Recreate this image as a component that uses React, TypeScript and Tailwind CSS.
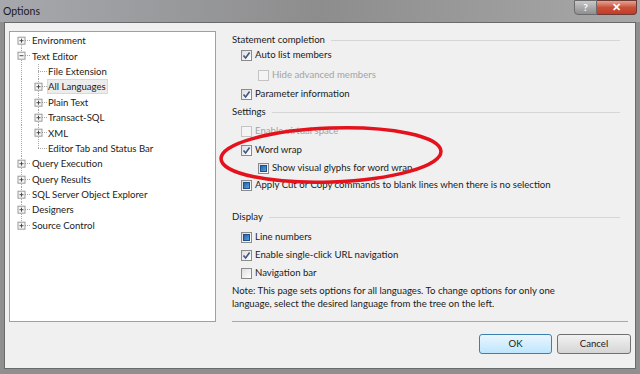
import React from 'react'

type BoxState = 'checked' | 'unchecked' | 'filled'

const font = { fontFamily: 'Lato, "Noto Sans", sans-serif' }

const Check = ({ state, disabled }: { state: BoxState; disabled?: boolean }) => (
  <span
    className={`relative flex h-[11px] w-[11px] shrink-0 items-center justify-center border ${
      disabled ? 'border-[#c4c4c4] bg-[#f4f4f4]' : 'border-[#8a8a8a] bg-gradient-to-br from-[#dedede] to-white'
    }`}
  >
    {state === 'checked' && (
      <svg width="9" height="9" viewBox="0 0 9 9">
        <path d="M1.5 4.5 L3.6 7 L7.6 1.5" fill="none" stroke="#3f5687" strokeWidth="1.6" />
      </svg>
    )}
    {state === 'filled' && (
      <span className="h-[7px] w-[7px] border border-[#1f4f8f] bg-gradient-to-br from-[#2a62a8] to-[#4fa3df]" />
    )}
  </span>
)

const Option = ({
  label,
  state = 'unchecked',
  disabled,
  indent,
  className = '',
}: {
  label: string
  state?: BoxState
  disabled?: boolean
  indent?: boolean
  className?: string
}) => (
  <div className={`flex h-[14px] items-center gap-[3px] ${indent ? 'pl-[26px]' : 'pl-[9px]'} ${className}`}>
    <Check state={state} disabled={disabled} />
    <span className={disabled ? 'text-[#a3a3a3]' : 'text-[#1b1b1b]'}>{label}</span>
  </div>
)

const Group = ({ title, className = '' }: { title: string; className?: string }) => (
  <div className={`flex h-[14px] items-center pr-[8px] ${className}`}>
    <span className="text-[#1b1b1b]">{title}</span>
    <span className="ml-[6px] h-px flex-1 bg-[#d6d6d6]" />
  </div>
)

// connector drawing for each tree row
type Node = {
  label: string
  level: 0 | 1
  box?: 'plus' | 'minus'
  first?: boolean
  last?: boolean
  lastChild?: boolean
  selected?: boolean
}

const nodes: Node[] = [
  { label: 'Environment', level: 0, box: 'plus', first: true },
  { label: 'Text Editor', level: 0, box: 'minus' },
  { label: 'File Extension', level: 1 },
  { label: 'All Languages', level: 1, box: 'plus', selected: true },
  { label: 'Plain Text', level: 1, box: 'plus' },
  { label: 'Transact-SQL', level: 1, box: 'plus' },
  { label: 'XML', level: 1, box: 'plus' },
  { label: 'Editor Tab and Status Bar', level: 1, lastChild: true },
  { label: 'Query Execution', level: 0, box: 'plus' },
  { label: 'Query Results', level: 0, box: 'plus' },
  { label: 'SQL Server Object Explorer', level: 0, box: 'plus' },
  { label: 'Designers', level: 0, box: 'plus' },
  { label: 'Source Control', level: 0, box: 'plus', last: true },
]

const Expander = ({ cx, kind }: { cx: number; kind: 'plus' | 'minus' }) => (
  <g>
    <rect x={cx - 3.5} y={4.2} width={7} height={7} fill="#f7f7f7" stroke="#9a9a9a" strokeWidth="1" />
    <line x1={cx - 2} y1={7.7} x2={cx + 2} y2={7.7} stroke="#4a4a4a" strokeWidth="1" />
    {kind === 'plus' && <line x1={cx} y1={5.7} x2={cx} y2={9.7} stroke="#4a4a4a" strokeWidth="1" />}
  </g>
)

const Connector = ({ node }: { node: Node }) => {
  const dot = { stroke: '#a8a8a8', strokeWidth: 1, strokeDasharray: '1 1' }
  const w = node.level === 0 ? 21 : 37
  return (
    <svg width={w} height="15.4" className="shrink-0">
      {node.level === 0 ? (
        <>
          <line x1="11.5" y1={node.first ? 7.7 : 0} x2="11.5" y2={node.last ? 7.7 : 15.4} {...dot} />
          <line x1="11" y1="7.5" x2="21" y2="7.5" {...dot} />
          {node.box && <Expander cx={11.5} kind={node.box} />}
        </>
      ) : (
        <>
          <line x1="11.5" y1="0" x2="11.5" y2="15.4" {...dot} />
          <line x1="28.5" y1="0" x2="28.5" y2={node.lastChild ? 7.7 : 15.4} {...dot} />
          <line x1="28" y1="7.5" x2="37" y2="7.5" {...dot} />
          {node.box && <Expander cx={28.5} kind={node.box} />}
        </>
      )}
    </svg>
  )
}

const Tree = () => (
  <div className="h-[291px] w-[207px] shrink-0 border border-[#a0a0a0] bg-white pt-[1px]">
    {nodes.map((n) => (
      <div key={n.label} className="flex h-[15.4px] items-center">
        <Connector node={n} />
        <span
          className={`whitespace-nowrap pr-[1px] leading-[13px] text-[#1b1b1b] ${
            n.selected ? 'border border-[#d9d9d9] bg-[#ececec]' : 'border border-transparent'
          }`}
        >
          {n.label}
        </span>
      </div>
    ))}
  </div>
)

const Settings = () => (
  <div className="flex h-[291px] flex-1 flex-col">
    <Group title="Statement completion" className="mt-[2px]" />
    <Option label="Auto list members" state="checked" className="mt-[1px]" />
    <Option label="Hide advanced members" indent disabled className="mt-[6px]" />
    <Option label="Parameter information" state="checked" className="mt-[5px]" />
    <Group title="Settings" className="mt-[4px]" />
    <Option label="Enable virtual space" disabled className="mt-[5px]" />
    <Option label="Word wrap" state="checked" className="mt-[5px]" />
    <Option label="Show visual glyphs for word wrap" state="filled" indent className="mt-[4px]" />
    <Option label="Apply Cut or Copy commands to blank lines when there is no selection" state="filled" className="mt-[3px]" />
    <Group title="Display" className="mt-[18px]" />
    <Option label="Line numbers" state="filled" className="mt-[6px]" />
    <Option label="Enable single-click URL navigation" state="checked" className="mt-[4px]" />
    <Option label="Navigation bar" className="mt-[4px]" />
    <p className="mt-[4px] leading-[13px] text-[#1b1b1b]">
      Note: This page sets options for all languages. To change options for only one
      <br />
      language, select the desired language from the tree on the left.
    </p>
    <div className="mt-auto h-px bg-[#a9a9a9]" />
  </div>
)

export default function App() {
  return (
    <div className="relative flex h-[374px] w-[640px] flex-col overflow-hidden bg-[#8f8f8f] text-[9.6px]" style={font}>
      <div className="flex h-[22px] shrink-0 items-start bg-gradient-to-r from-[#a6a8ad] via-[#8d8d8d] to-[#a8a8a8]">
        <span className="ml-[3px] mt-[4px] text-[10.5px] text-[#1a1a1a]">Options</span>
        <div className="ml-auto mr-[3px] flex h-[15px]">
          <div className="flex w-[23px] items-center justify-center rounded-bl-[4px] border border-[#6b6b6b] bg-gradient-to-b from-[#c9c9c9] to-[#8e8e8e] text-[10px] font-bold text-white">
            ?
          </div>
          <div className="flex w-[40px] items-center justify-center rounded-br-[4px] border border-l-0 border-[#6b3a34] bg-gradient-to-b from-[#e4a394] via-[#c8503a] to-[#c53b25] text-[11px] font-bold text-white">
            ✕
          </div>
        </div>
      </div>
      <div className="mx-[4px] flex flex-1 flex-col border border-[#6a6a6a] bg-[#f0f0f0]">
        <div className="ml-[4px] mr-[7px] mt-[8px] flex gap-[16px]">
          <Tree />
          <Settings />
        </div>
        <div className="mr-[4px] mt-[12px] flex justify-end gap-[5px]">
          <button className="h-[20px] w-[73px] rounded-[3px] border border-[#3c7fb1] bg-gradient-to-b from-[#eaf6fd] to-[#bee6fd] text-[#1b1b1b]">
            OK
          </button>
          <button className="h-[20px] w-[74px] rounded-[3px] border border-[#707070] bg-gradient-to-b from-[#f2f2f2] to-[#d5d5d5] text-[#1b1b1b]">
            Cancel
          </button>
        </div>
      </div>
      <div className="h-[5px] shrink-0" />
      <svg className="pointer-events-none absolute inset-0" width="640" height="374">
        <ellipse
          cx="331"
          cy="155"
          rx="110"
          ry="27"
          transform="rotate(-2 331 155)"
          fill="none"
          stroke="#e3121c"
          strokeWidth="3.5"
        />
      </svg>
    </div>
  )
}
